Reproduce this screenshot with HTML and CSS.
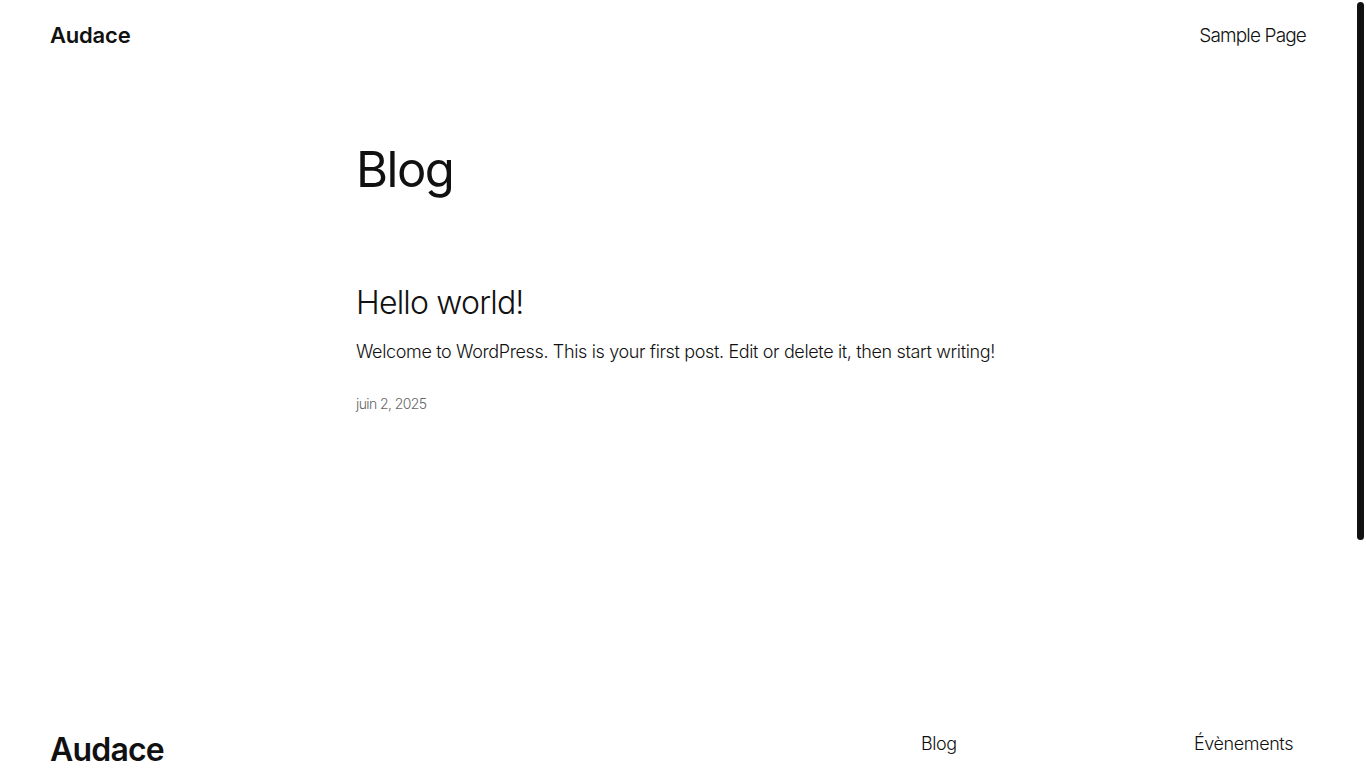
FILE: index.html
```html
<!DOCTYPE html>
<html lang="fr">
<head>
<meta charset="utf-8">
<title>Blog – Audace</title>
<link rel="stylesheet" href="styles.css">
</head>
<body>
<header class="site-header">
  <a class="site-title" href="#">Audace</a>
  <nav class="header-nav"><a href="#">Sample Page</a></nav>
</header>
<main class="site-main">
  <h1 class="page-title">Blog</h1>
  <article class="post">
    <h2 class="post-title"><a href="#">Hello world!</a></h2>
    <p class="post-excerpt">Welcome to WordPress. This is your first post. Edit or delete it, then start writing!</p>
    <div class="post-date">juin 2, 2025</div>
  </article>
</main>
<footer class="site-footer">
  <div class="footer-top">
    <a class="footer-title" href="#">Audace</a>
    <div class="footer-cols">
      <ul class="footer-col">
        <li><a href="#">Blog</a></li>
      </ul>
      <ul class="footer-col">
        <li><a href="#">Évènements</a></li>
      </ul>
    </div>
  </div>
</footer>
<div class="scroll-thumb" aria-hidden="true"></div>
</body>
</html>
```
FILE: styles.css
```css
html { background: #fff; overflow: hidden; }
body {
  margin: 0 10px 0 0;
  font-family: Inter, "Noto Sans", sans-serif;
  color: #111;
  background: #fff;
}
a { color: inherit; text-decoration: none; }
.scroll-thumb {
  position: fixed;
  top: 2px;
  right: 2px;
  width: 7px;
  height: 538px;
  background: #111;
  border-radius: 4px;
}
.site-header {
  height: 70px;
  padding: 0 50px;
  display: flex;
  align-items: center;
  justify-content: space-between;
}
.site-title {
  font-size: 22px;
  font-weight: 600;
  letter-spacing: -0.2px;
}
.header-nav a {
  font-size: 19px;
  font-weight: 300;
  letter-spacing: -0.85px;
}
.site-main {
  width: 644px;
  margin: 0 auto;
  padding-top: 71px;
  padding-bottom: 318px;
}
.page-title {
  margin: 0;
  font-size: 49px;
  font-weight: 400;
  line-height: 1.2;
  letter-spacing: -1.5px;
}
.post { margin-top: 84px; }
.post-title {
  margin: 0;
  font-size: 32px;
  font-weight: 300;
  line-height: 1.2;
  letter-spacing: -0.8px;
}
.post-excerpt {
  margin: 16px 0 0;
  font-size: 18px;
  font-weight: 300;
  line-height: 1.5;
  letter-spacing: -0.36px;
}
.post-date {
  margin-top: 30px;
  font-size: 14px;
  font-weight: 300;
  color: #666;
  letter-spacing: -0.6px;
}
.site-footer { padding: 0 50px; }
.footer-top {
  display: flex;
  justify-content: space-between;
  align-items: flex-start;
}
.footer-title {
  margin-top: 2px;
  font-size: 32px;
  font-weight: 600;
  letter-spacing: -0.8px;
  line-height: 1.1;
}
.footer-cols {
  display: grid;
  grid-template-columns: 273px 112px;
}
.footer-col {
  list-style: none;
  margin: 0;
  padding: 0;
}
.footer-col li {
  font-size: 18px;
  font-weight: 300;
  letter-spacing: -0.4px;
  line-height: 1.5;
}
```
